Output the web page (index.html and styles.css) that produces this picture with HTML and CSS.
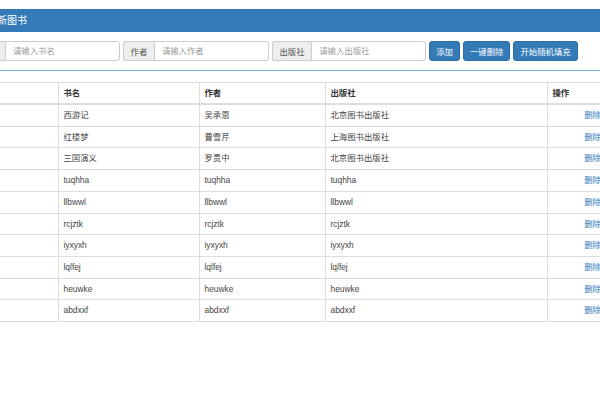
FILE: index.html
```html
<!DOCTYPE html>
<html lang="zh-CN">
<head>
<meta charset="utf-8">
<title>图书管理</title>
<link rel="stylesheet" href="styles.css">
</head>
<body>
<div class="page">
  <div class="panel">
    <div class="panel-heading">添加新图书</div>
    <div class="panel-body">
      <div class="form-row">
        <div class="input-group">
          <span class="addon">书名</span>
          <input class="field" type="text" placeholder="请输入书名">
        </div>
        <div class="input-group">
          <span class="addon">作者</span>
          <input class="field" type="text" placeholder="请输入作者">
        </div>
        <div class="input-group">
          <span class="addon">出版社</span>
          <input class="field" type="text" placeholder="请输入出版社">
        </div>
        <button class="btn">添加</button>
        <button class="btn">一键删除</button>
        <button class="btn">开始随机填充</button>
      </div>
    </div>
  </div>

  <table class="books">
    <colgroup>
      <col class="c-id"><col class="c-name"><col class="c-author"><col class="c-pub"><col class="c-op">
    </colgroup>
    <thead>
      <tr><th></th><th>书名</th><th>作者</th><th>出版社</th><th>操作</th></tr>
    </thead>
    <tbody>
      <tr><td></td><td>西游记</td><td>吴承恩</td><td>北京图书出版社</td><td class="op"><a href="#">删除</a></td></tr>
      <tr><td></td><td>红楼梦</td><td>曹雪芹</td><td>上海图书出版社</td><td class="op"><a href="#">删除</a></td></tr>
      <tr><td></td><td>三国演义</td><td>罗贯中</td><td>北京图书出版社</td><td class="op"><a href="#">删除</a></td></tr>
      <tr><td></td><td>tuqhha</td><td>tuqhha</td><td>tuqhha</td><td class="op"><a href="#">删除</a></td></tr>
      <tr><td></td><td>llbwwl</td><td>llbwwl</td><td>llbwwl</td><td class="op"><a href="#">删除</a></td></tr>
      <tr><td></td><td>rcjztk</td><td>rcjztk</td><td>rcjztk</td><td class="op"><a href="#">删除</a></td></tr>
      <tr><td></td><td>iyxyxh</td><td>iyxyxh</td><td>iyxyxh</td><td class="op"><a href="#">删除</a></td></tr>
      <tr><td></td><td>lqlfej</td><td>lqlfej</td><td>lqlfej</td><td class="op"><a href="#">删除</a></td></tr>
      <tr><td></td><td>heuwke</td><td>heuwke</td><td>heuwke</td><td class="op"><a href="#">删除</a></td></tr>
      <tr><td></td><td>abdxxf</td><td>abdxxf</td><td>abdxxf</td><td class="op"><a href="#">删除</a></td></tr>
    </tbody>
  </table>
</div>
</body>
</html>
```

FILE: styles.css
```css
html, body {
  margin: 0;
  padding: 0;
  overflow: hidden;
  background: #fff;
}

body {
  font-family: "Liberation Sans", "Noto Sans CJK SC", sans-serif;
  font-size: 8.4px;
  color: #333;
}

.page {
  width: 670px;
  margin-left: -33px;
  padding-top: 9px;
}

.panel {
  border-bottom: 1px solid #7eaedb;
  margin-bottom: 11px;
}

.panel-heading {
  height: 23px;
  line-height: 23px;
  background: #337ab7;
  color: #fff;
  font-size: 10px;
  padding-left: 10px;
}

.panel-body {
  padding: 9px 7px 9px;
}

.form-row {
  display: flex;
  align-items: center;
  gap: 3px;
}

.input-group {
  display: flex;
  height: 20px;
}

.addon {
  display: flex;
  align-items: center;
  padding: 0 6.6px;
  background: #eee;
  border: 1px solid #ccc;
  border-right: none;
  border-radius: 3px 0 0 3px;
  color: #555;
  white-space: nowrap;
}

.field {
  box-sizing: border-box;
  width: 115px;
  height: 20px;
  margin: 0;
  padding: 0 7px;
  border: 1px solid #ccc;
  border-radius: 0 3px 3px 0;
  font-family: inherit;
  font-size: 8.4px;
  color: #555;
  background: #fff;
  outline: none;
}

.field::placeholder {
  color: #999;
}

.btn {
  box-sizing: border-box;
  height: 20px;
  margin: 0;
  padding: 0 6px;
  background: #337ab7;
  border: 1px solid #2e6da4;
  border-radius: 3px;
  color: #fff;
  font-family: inherit;
  font-size: 8.4px;
  white-space: nowrap;
}

.books {
  width: 670px;
  table-layout: fixed;
  border-collapse: separate;
  border-spacing: 0;
  border-top: 1px solid #ddd;
}

.c-id { width: 91px; }
.c-name { width: 141px; }
.c-author { width: 126px; }
.c-pub { width: 222px; }
.c-op { width: 90px; }

.books th,
.books td {
  box-sizing: border-box;
  padding: 0 4.5px;
  text-align: left;
  white-space: nowrap;
  overflow: hidden;
}

.books th + th,
.books td + td {
  border-left: 1px solid #ddd;
}

.books th {
  height: 22px;
  line-height: 20px;
  font-weight: bold;
  color: #333;
  border-bottom: 2px solid #ddd;
}

.books td {
  height: 21.7px;
  line-height: 20.7px;
  color: #444;
  border-bottom: 1px solid #ddd;
}

.books td.op {
  text-align: center;
}

.books a {
  color: #337ab7;
  text-decoration: none;
}
```
